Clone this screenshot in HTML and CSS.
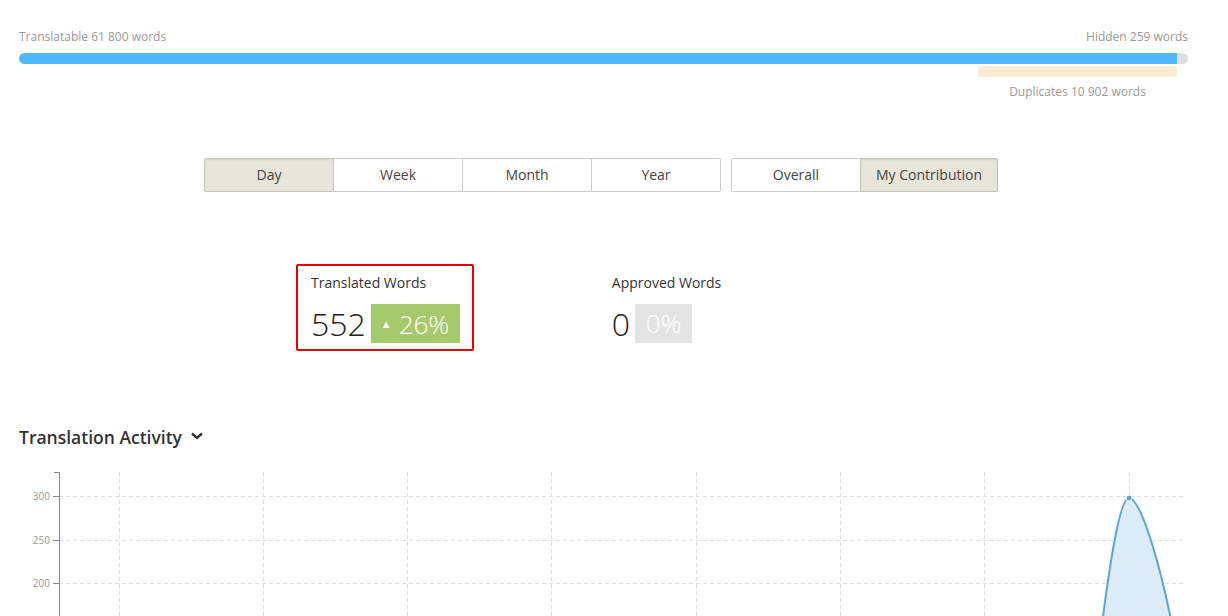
FILE: index.html
```html
<!DOCTYPE html>
<html lang="en">
<head>
  <meta charset="UTF-8" />
  <title>Report</title>
  <link rel="stylesheet" href="styles.css">
</head>
<body>
  <div class="page">

    <!-- Progresso de palavras -->
    <div class="words">
      <div class="words-labels">
        <span>Translatable 61 800 words</span>
        <span>Hidden 259 words</span>
      </div>
      <div class="bar">
        <div class="bar-fill" style="width: 99.06%"></div>
      </div>
      <div class="dups" style="margin-left: 82.04%; width: 17.02%">
        <div class="dups-bar"></div>
        <div class="dups-label">Duplicates 10 902 words</div>
      </div>
    </div>

    <!-- Filtros -->
    <div class="tabs">
      <div class="tab-group">
        <button class="tab active">Day</button>
        <button class="tab">Week</button>
        <button class="tab">Month</button>
        <button class="tab">Year</button>
      </div>
      <div class="tab-group">
        <button class="tab">Overall</button>
        <button class="tab active wide">My Contribution</button>
      </div>
    </div>

    <!-- Números -->
    <div class="stats">
      <div class="stat highlight">
        <div class="stat-label">Translated Words</div>
        <div class="stat-row">
          <span class="stat-num">552</span>
          <span class="badge up"><span class="tri">&#9650;</span>26%</span>
        </div>
      </div>
      <div class="stat">
        <div class="stat-label">Approved Words</div>
        <div class="stat-row">
          <span class="stat-num">0</span>
          <span class="badge none">0%</span>
        </div>
      </div>
    </div>

    <h2 class="section-title">Translation Activity
      <svg class="chev" width="14" height="10" viewBox="0 0 14 10"><path d="M2 2.5 L7 7 L12 2.5" fill="none" stroke="#333" stroke-width="2.4"/></svg>
    </h2>

    <!-- Gráfico -->
    <svg class="chart" width="1169" height="160" viewBox="0 0 1169 160">
      <g stroke="#ddd" stroke-width="1" stroke-dasharray="4 3">
        <line x1="40" y1="34.5" x2="1167" y2="34.5"/>
        <line x1="40" y1="78.5" x2="1167" y2="78.5"/>
        <line x1="40" y1="121.5" x2="1167" y2="121.5"/>
        <line x1="100.5" y1="10" x2="100.5" y2="160"/>
        <line x1="244.5" y1="10" x2="244.5" y2="160"/>
        <line x1="388.5" y1="10" x2="388.5" y2="160"/>
        <line x1="532.5" y1="10" x2="532.5" y2="160"/>
        <line x1="677.5" y1="10" x2="677.5" y2="160"/>
        <line x1="821.5" y1="10" x2="821.5" y2="160"/>
        <line x1="965.5" y1="10" x2="965.5" y2="160"/>
        <line x1="1110.5" y1="10" x2="1110.5" y2="160"/>
      </g>
      <g stroke="#888" stroke-width="1">
        <line x1="40.5" y1="10" x2="40.5" y2="160"/>
        <line x1="35" y1="10.5" x2="40" y2="10.5"/>
        <line x1="34" y1="34.5" x2="40" y2="34.5"/>
        <line x1="34" y1="78.5" x2="40" y2="78.5"/>
        <line x1="34" y1="121.5" x2="40" y2="121.5"/>
      </g>
      <g class="axis-text" text-anchor="end">
        <text x="31" y="38">300</text>
        <text x="31" y="82">250</text>
        <text x="31" y="125">200</text>
      </g>
      <path d="M1081 178 C1091 98 1101 36 1110 36 C1121 36 1141 98 1156 178 Z" fill="#dcecf9"/>
      <path d="M1081 178 C1091 98 1101 36 1110 36 C1121 36 1141 98 1156 178" fill="none" stroke="#5aa6da" stroke-width="2"/>
      <circle cx="1110" cy="36" r="3" fill="#5aa6da" stroke="#fff" stroke-width="1"/>
    </svg>

  </div>
</body>
</html>
```

FILE: styles.css
```css
body {
  margin: 0;
  padding: 0;
  background: #fff;
  font-family: "Open Sans", "Liberation Sans", sans-serif;
  color: #333;
  overflow: hidden;
}

.page {
  padding: 29px 40px 0 19px;
}

/* Barra de palavras */
.words-labels {
  display: flex;
  justify-content: space-between;
  font-size: 12px;
  line-height: 16px;
  color: #999;
}

.bar {
  margin-top: 8px;
  height: 11px;
  border-radius: 6px;
  background: #dedede;
  overflow: hidden;
}

.bar-fill {
  height: 100%;
  background: #4db8fd;
  border-radius: 6px 0 0 6px;
}

.dups {
  margin-top: 2px;
}

.dups-bar {
  height: 11px;
  background: #faebd2;
  border-radius: 2px;
}

.dups-label {
  margin-top: 7px;
  text-align: center;
  white-space: nowrap;
  font-size: 12px;
  line-height: 16px;
  color: #999;
}

/* Filtros */
.tabs {
  margin-top: 58px;
  display: flex;
  justify-content: center;
  gap: 10px;
  padding-right: 5px;
}

.tab-group {
  display: flex;
}

.tab {
  width: 130px;
  height: 34px;
  border: 1px solid #ccc;
  margin-left: -1px;
  background: #fff;
  font-family: inherit;
  font-size: 14px;
  color: #444;
  padding: 0 0 2px;
}

.tab:first-child {
  margin-left: 0;
  border-radius: 2px 0 0 2px;
}

.tab:last-child {
  border-radius: 0 2px 2px 0;
}

.tab.wide {
  width: 138px;
}

.tab.active {
  background: #e8e5da;
  border-color: #c8c5bb;
  box-shadow: inset 0 1px 2px rgba(0, 0, 0, 0.08);
}

/* Números */
.stats {
  margin-top: 72px;
  margin-left: 277px;
  display: flex;
  gap: 121px;
}

.stat {
  padding: 7px 12px 6px 15px;
  border: 2px solid transparent;
}

.stat.highlight {
  border-color: #e60000;
  border-radius: 2px;
  padding-left: 13px;
}

.stat-label {
  font-size: 14px;
  line-height: 20px;
  color: #333;
}

.stat-row {
  margin-top: 11px;
  display: flex;
  align-items: center;
  gap: 5px;
}

.stat-num {
  font-size: 32px;
  font-weight: 300;
  line-height: 39px;
  color: #222;
}

.badge {
  height: 39px;
  line-height: 39px;
  font-size: 26px;
  font-weight: 300;
  color: #fff;
  box-sizing: border-box;
}

.badge.up {
  background: #a5ca6b;
  width: 89px;
  padding: 0 0 0 10px;
}

.badge.none {
  background: #e4e4e4;
  width: 57px;
  text-align: center;
  padding: 0;
}

.tri {
  font-size: 11px;
  vertical-align: 6px;
  margin-right: 7px;
}

/* Gráfico */
.section-title {
  margin: 74px 0 0;
  font-size: 17.5px;
  font-weight: 600;
  line-height: 24px;
  color: #333;
  display: flex;
  align-items: center;
}

.chev {
  margin-left: 8px;
  margin-top: -2px;
}

.chart {
  display: block;
  margin-top: 13px;
}

.axis-text {
  font-size: 10px;
  fill: #999;
}
```
